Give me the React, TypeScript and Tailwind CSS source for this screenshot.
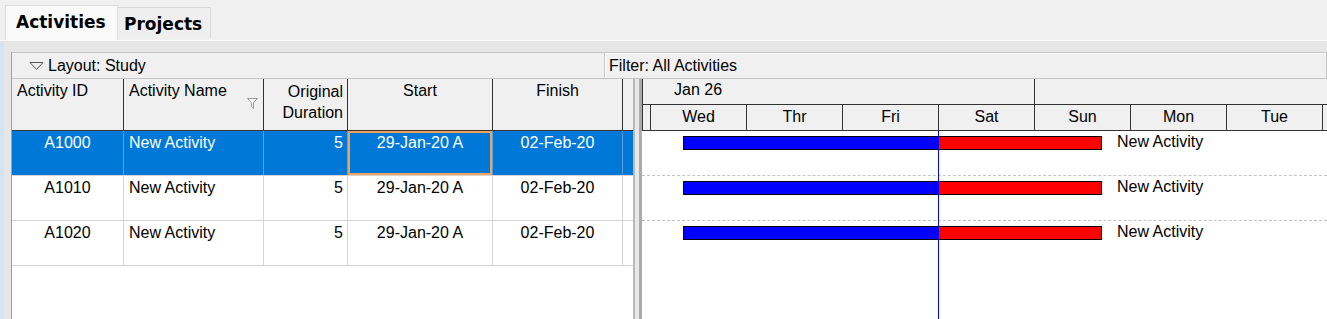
import React from "react";

const font = { fontFamily: '"Liberation Sans", Arial, sans-serif' };

type Row = { id: string; sel?: boolean };
const rows: Row[] = [{ id: "A1000", sel: true }, { id: "A1010" }, { id: "A1020" }];

const days = ["Wed", "Thr", "Fri", "Sat", "Sun", "Mon", "Tue"];

function TableHeader() {
  return (
    <div className="flex h-[52px] bg-[#f0f0f0] border-b border-[#333]">
      <div className="w-[112px] shrink-0 border-r border-[#333] pl-[5px] pt-[2px] leading-[20px]">Activity ID</div>
      <div className="w-[140px] shrink-0 border-r border-[#333] pl-[5px] pt-[2px] leading-[20px] relative">
        Activity Name
        <svg className="absolute left-[123px] top-[19px]" width="11" height="11" viewBox="0 0 11 11">
          <path d="M0.5 0.5 L10.5 0.5 L6.5 4.5 L6.5 10.5 L4.5 8.5 L4.5 4.5 Z" fill="#fff" stroke="#9a9a9a" strokeWidth="1" />
        </svg>
      </div>
      <div className="w-[84px] shrink-0 border-r border-[#333] pr-[4px] pt-[2px] leading-[21px] text-right">
        Original
        <br />
        Duration
      </div>
      <div className="w-[145px] shrink-0 border-r border-[#333] pt-[2px] leading-[20px] text-center">Start</div>
      <div className="w-[130px] shrink-0 border-r border-[#333] pt-[2px] leading-[20px] text-center">Finish</div>
      <div className="w-[10px] shrink-0" />
    </div>
  );
}

function TableRow({ r }: { r: Row }) {
  const sel = r.sel;
  const bc = sel ? "border-[#5a9fe0]" : "border-[#d4d4d4]";
  return (
    <div className={`flex h-[45px] border-b border-[#d4d4d4] ${sel ? "bg-[#0078d7] text-white" : "bg-white text-black"}`}>
      <div className={`w-[112px] shrink-0 border-r ${bc} pt-[2px] leading-[20px] text-center`}>{r.id}</div>
      <div className={`w-[140px] shrink-0 border-r ${bc} pl-[5px] pt-[2px] leading-[20px]`}>New Activity</div>
      <div className={`w-[84px] shrink-0 border-r ${bc} pr-[4px] pt-[2px] leading-[20px] text-right`}>5</div>
      <div
        className={`w-[145px] shrink-0 border-r ${bc} pt-[2px] leading-[20px] text-center ${
          sel ? "shadow-[inset_0_0_0_2px_#eea25e]" : ""
        }`}
      >
        29-Jan-20 A
      </div>
      <div className={`w-[130px] shrink-0 border-r ${bc} pt-[2px] leading-[20px] text-center`}>02-Feb-20</div>
      <div className="w-[10px] shrink-0" />
    </div>
  );
}

function GanttHeader() {
  return (
    <div className="h-[52px] bg-[#f0f0f0] border-l border-[#333] border-b flex flex-col">
      <div className="h-[26px] flex border-b border-[#333]">
        <div className="w-[392px] shrink-0 border-r border-[#333] pl-[31px] pt-[1px] leading-[20px]">Jan 26</div>
        <div className="flex-1" />
      </div>
      <div className="flex-1 flex">
        <div className="w-[8px] shrink-0 border-r border-[#333]" />
        {days.map((d) => (
          <div key={d} className="w-[96px] shrink-0 border-r border-[#333] text-center pt-[2px] leading-[20px]">
            {d}
          </div>
        ))}
        <div className="flex-1" />
      </div>
    </div>
  );
}

function GanttBody() {
  return (
    <div className="flex-1 relative bg-white">
      {rows.map((r, i) => (
        <div
          key={r.id}
          className={`h-[45px] relative ${i < 2 ? "border-b border-dashed border-[#c4c4c4]" : ""}`}
        >
          <div className="absolute left-[41px] top-[5px] h-[14px] w-[256px] bg-[#0000ff] border border-black border-r-0" />
          <div className="absolute left-[297px] top-[5px] h-[14px] w-[163px] bg-[#ff0000] border border-black border-l-0" />
          <div className="absolute left-[475px] top-[1px] leading-[20px] text-black">New Activity</div>
        </div>
      ))}
      <div className="absolute left-[296px] top-0 bottom-0 w-[1px] bg-[#0000ff] z-10" />
    </div>
  );
}

export default function App() {
  return (
    <div className="w-[1327px] h-[319px] overflow-hidden bg-[#f0f0f0] flex flex-col text-[16px] text-black" style={font}>
      {/* tabs */}
      <div className="h-[40px] shrink-0 flex items-end pl-[5px] bg-[#f0f0f0]">
        <div
          className="w-[113px] h-[35px] bg-[#fafafa] border-t border-l border-r border-[#dcdcdc] pl-[10px] pt-[5px] leading-[22px] font-bold text-[17px]"
          style={{ fontFamily: '"DejaVu Sans", Verdana, sans-serif' }}
        >
          Activities
        </div>
        <div
          className="w-[93px] h-[31px] mb-[2px] bg-[#efefef] border-t border-r border-[#d9d9d9] pl-[6px] pt-[5px] leading-[22px] font-bold text-[17px]"
          style={{ fontFamily: '"DejaVu Sans", Verdana, sans-serif' }}
        >
          Projects
        </div>
        <div className="flex-1" />
      </div>
      {/* content */}
      <div className="flex-1 flex min-h-0 border-t border-[#fafafa]">
        <div className="w-[4px] shrink-0 bg-[#d3e4f5]" />
        <div className="flex-1 flex flex-col bg-[#e6e6e6] pl-[7px] pt-[11px] min-w-0">
          <div className="flex-1 flex flex-col border-l border-[#a0a0a0] min-h-0">
            {/* layout / filter bar */}
            <div className="h-[27px] shrink-0 flex bg-[#f0f0f0]">
              <div className="w-[592px] shrink-0 flex items-center border-t border-b border-[#c4c4c4] pl-[17px]">
                <svg width="15" height="10" viewBox="0 0 15 10" className="mr-[4px]">
                  <path d="M1 1.5 L14 1.5 L7.5 8.5 Z" fill="none" stroke="#555" strokeWidth="1" />
                </svg>
                <span className="leading-[20px] pt-[1px]">Layout: Study</span>
              </div>
              <div className="flex-1 flex items-center border border-[#c4c4c4] shadow-[inset_1px_1px_0_#ffffff] pl-[4px]">
                <span className="leading-[20px]">Filter: All Activities</span>
              </div>
            </div>
            {/* main */}
            <div className="flex-1 flex min-h-0">
              <div className="w-[621px] shrink-0 flex flex-col bg-white">
                <TableHeader />
                {rows.map((r) => (
                  <TableRow key={r.id} r={r} />
                ))}
                <div className="flex-1 bg-white" />
              </div>
              {/* splitter */}
              <div className="w-[9px] shrink-0 flex">
                <div className="w-[2px] bg-[#b9b9b9]" />
                <div className="w-[4px] bg-[#e8e8e8]" />
                <div className="w-[3px] bg-[#ababab]" />
              </div>
              <div className="flex-1 flex flex-col min-w-0">
                <GanttHeader />
                <GanttBody />
              </div>
            </div>
          </div>
        </div>
      </div>
    </div>
  );
}
